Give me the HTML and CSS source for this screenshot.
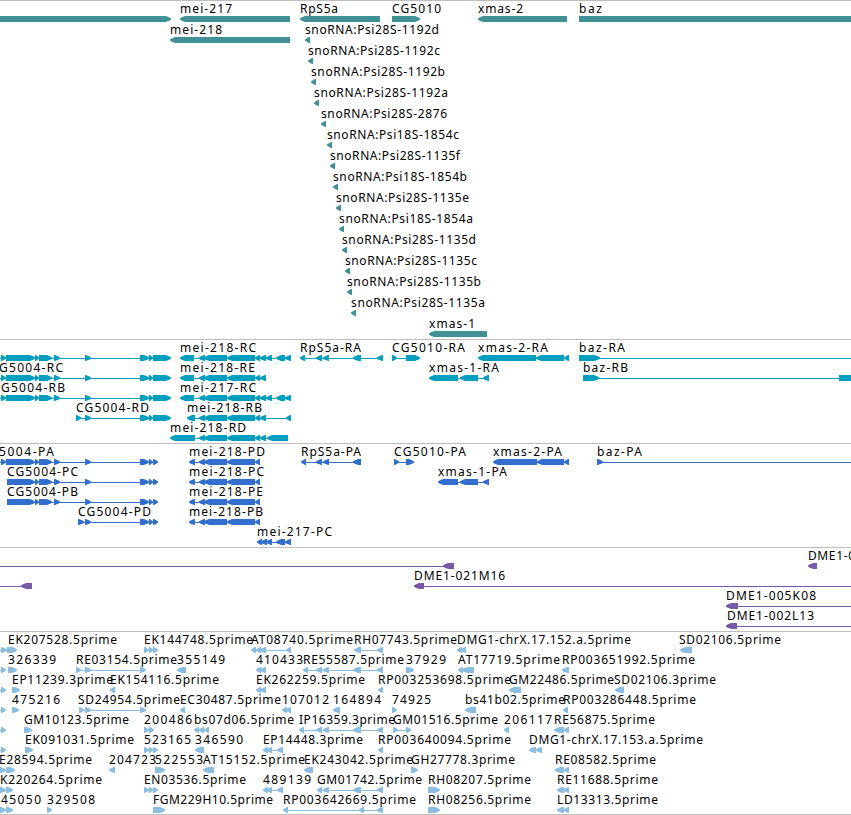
FILE: index.html
```html
<!DOCTYPE html>
<html lang="en">
  <head>
    <meta charset="UTF-8" />
    <meta name="viewport" content="width=device-width, initial-scale=1.0" />
    <title>Genome Browser</title>
    <link rel="stylesheet" href="styles.css">
  </head>
  <body>
    <main class="browser">
      <section class="track genes" id="genes"></section>
      <section class="track transcripts" id="transcripts"></section>
      <section class="track proteins" id="proteins"></section>
      <section class="track clones" id="clones"></section>
      <section class="track ests" id="ests"></section>
    </main>
    <script src="tracks.js"></script>
  </body>
</html>
```

FILE: styles.css
```css
body {
  margin: 0;
  background-color: #fff;
  overflow: hidden;
}

.browser {
  width: 851px;
  border-bottom: 1px solid #bebebe;
}

.track {
  display: flex;
  flex-direction: column;
  box-sizing: border-box;
  border-top: 1px solid #bebebe;
  padding-bottom: 3px;
  overflow: hidden;
}

.row {
  display: block;
  width: 100%;
  height: 20px;
  overflow: visible;
}

.label {
  font-family: "Noto Sans", "DejaVu Sans", sans-serif;
  font-size: 12px;
  fill: #000;
}

.genes {
  fill: #409095;
  padding-bottom: 2px;
}

.genes .row {
  height: 21px;
}

.transcripts {
  fill: #009fbf;
}

.proteins {
  fill: #326ecd;
}

.clones {
  fill: #7859a8;
}

.ests {
  fill: #8abddf;
  padding-bottom: 2px;
}
```

FILE: tracks.js
```javascript
const SVG_NS = "http://www.w3.org/2000/svg";
const BAR_TOP = 15;
const BAR_HEIGHT = 6;
const HEAD = 5;
const BASELINE = 12;

// exon sets used by more than one feature
const cgStart = [[-9, 0], [1, 6], [6, 35], [35, 39], [39, 52], [54, 60], [85, 91]];
const cgEnd = [[140, 149], [149, 153], [153, 171]];
const cgCoding = [[140, 149], [149, 153], [153, 158]];
const cgInner = [[7, 35], [35, 39], [39, 52], [54, 60], [85, 91]];
const meiBody = [[199, 205], [204, 227], [227, 255], [255, 260]];
const meiTail = [[260, 266], [266, 272], [276, 285], [285, 291]];
const rpTail = [[323, 329], [353, 361], [377, 383]];
const three = [[144, 149], [149, 153], [153, 158]];

// feature: [label, label x, label end, strand, exons]
const tracks = {
  genes: [
    [
      ["", 0, 0, "+", [[-20, 171]]],
      ["mei-217", 180, 232, "-", [[180, 290]]],
      ["RpS5a", 300, 338, "-", [[300, 380]]],
      ["CG5010", 392, 441, "+", [[392, 420]]],
      ["xmas-2", 478, 523, "-", [[478, 567]]],
      ["baz", 579, 602, "+", [[579, 900]]],
    ],
    [
      ["mei-218", 170, 222, "-", [[170, 290]]],
      ["snoRNA:Psi28S-1192d", 305, 439, "-", [[305, 310]]],
    ],
    [["snoRNA:Psi28S-1192c", 308, 440, "-", [[308, 313]]]],
    [["snoRNA:Psi28S-1192b", 311, 445, "-", [[311, 316]]]],
    [["snoRNA:Psi28S-1192a", 314, 448, "-", [[314, 319]]]],
    [["snoRNA:Psi28S-2876", 321, 447, "-", [[321, 326]]]],
    [["snoRNA:Psi18S-1854c", 327, 459, "-", [[327, 332]]]],
    [["snoRNA:Psi28S-1135f", 330, 460, "-", [[330, 335]]]],
    [["snoRNA:Psi18S-1854b", 333, 467, "-", [[333, 338]]]],
    [["snoRNA:Psi28S-1135e", 336, 469, "-", [[336, 341]]]],
    [["snoRNA:Psi18S-1854a", 339, 473, "-", [[339, 344]]]],
    [["snoRNA:Psi28S-1135d", 342, 476, "-", [[342, 347]]]],
    [["snoRNA:Psi28S-1135c", 345, 477, "-", [[345, 350]]]],
    [["snoRNA:Psi28S-1135b", 347, 481, "-", [[347, 352]]]],
    [["snoRNA:Psi28S-1135a", 351, 485, "-", [[351, 356]]]],
    [["xmas-1", 429, 475, "-", [[429, 487]]]],
  ],
  transcripts: [
    [
      ["", 0, 0, "+", [...cgStart, ...cgEnd]],
      ["mei-218-RC", 180, 256, "-", [[180, 194], ...meiBody, ...meiTail]],
      ["RpS5a-RA", 300, 361, "-", [[300, 305], [316, 322], ...rpTail]],
      ["CG5010-RA", 392, 465, "+", [[392, 397], [406, 420]]],
      ["xmas-2-RA", 478, 548, "-", [[478, 536], [536, 564], [564, 569]]],
      ["baz-RA", 579, 625, "+", [[579, 600], [900, 910]]],
    ],
    [
      ["G5004-RC", -1, 63, "+", [...cgStart, ...cgEnd]],
      ["mei-218-RE", 180, 255, "-", [[180, 194], ...meiBody, [260, 266]]],
      ["xmas-1-RA", 429, 499, "-", [[429, 458], [460, 478], [483, 489]]],
      ["baz-RB", 583, 628, "+", [[583, 599], [839, 900]]],
    ],
    [
      ["G5004-RB", 1, 65, "+", [...cgStart, ...cgEnd]],
      ["mei-217-RC", 180, 256, "-", [[180, 194], ...meiBody, ...meiTail]],
    ],
    [
      ["CG5004-RD", 76, 149, "+", [[76, 81], [85, 91], ...cgEnd]],
      ["mei-218-RB", 187, 262, "-", [[187, 195], ...meiBody, [260, 266], [286, 291]]],
    ],
    [["mei-218-RD", 170, 246, "-", [[170, 195], ...meiBody, [260, 266], [267, 288]]]],
  ],
  proteins: [
    [
      ["5004-PA", -1, 54, "+", [...cgStart, ...cgCoding]],
      ["mei-218-PD", 189, 265, "-", [[189, 195], ...meiBody]],
      ["RpS5a-PA", 301, 361, "-", [[301, 306], [316, 322], [323, 329], [353, 361]]],
      ["CG5010-PA", 394, 466, "+", [[394, 399], [406, 414]]],
      ["xmas-2-PA", 493, 562, "-", [[493, 537], [537, 564], [564, 569]]],
      ["baz-PA", 597, 642, "+", [[597, 603], [900, 910]]],
    ],
    [
      ["CG5004-PC", 7, 78, "+", [...cgInner, ...cgCoding]],
      ["mei-218-PC", 189, 264, "-", [[189, 195], ...meiBody]],
      ["xmas-1-PA", 438, 507, "-", [[438, 458], [460, 478], [483, 489]]],
    ],
    [
      ["CG5004-PB", 7, 78, "+", [...cgInner, ...cgCoding]],
      ["mei-218-PE", 189, 263, "-", [[189, 195], ...meiBody]],
    ],
    [
      ["CG5004-PD", 78, 151, "+", [[78, 84], [85, 91], ...cgCoding]],
      ["mei-218-PB", 189, 263, "-", [[189, 195], ...meiBody]],
    ],
    [["mei-217-PC", 257, 332, "-", [[257, 262], [261, 267], [266, 272], [276, 285], [285, 291]]]],
  ],
  clones: [
    [
      ["", 0, 0, "-", [[-50, -40], [443, 454]]],
      ["DME1-0", 808, 855, "-", [[808, 817]]],
    ],
    [
      ["", 0, 0, "-", [[-50, -40], [21, 32]]],
      ["DME1-021M16", 414, 505, "-", [[414, 424], [900, 910]]],
    ],
    [["DME1-005K08", 726, 816, "-", [[726, 738], [900, 910]]]],
    [["DME1-002L13", 727, 814, "-", [[726, 737], [900, 910]]]],
  ],
  ests: [
    [
      ["EK207528.5prime", 8, 117, "+", [[-9, 0], [1, 7], [7, 17]]],
      ["EK144748.5prime", 144, 253, "+", three],
      ["AT08740.5prime", 251, 353, "-", [[251, 256], [256, 261], [260, 266], [286, 291]]],
      ["RH07743.5prime", 354, 457, "-", [[354, 361], [377, 383]]],
      ["DMG1-chrX.17.152.a.5prime", 457, 631, "-", [[457, 462], [461, 466]]],
      ["SD02106.5prime", 679, 781, "-", [[680, 692]]],
    ],
    [
      ["326339", 8, 56, "+", [[8, 17]]],
      ["", 0, 0, "+", [[-9, 0], [1, 6]]],
      ["RE03154.5prime", 76, 177, "+", [[76, 81], [85, 91], [140, 146]]],
      ["355149", 177, 225, "-", [[177, 186]]],
      ["410433", 256, 303, "-", [[256, 261], [260, 266]]],
      ["RE55587.5prime", 303, 404, "-", [[303, 308], [316, 322], ...rpTail]],
      ["37929", 406, 446, "+", [[406, 414]]],
      ["AT17719.5prime", 458, 560, "-", [[458, 463], [462, 474]]],
      ["RP003651992.5prime", 562, 695, "-", [[562, 569]]],
    ],
    [
      ["EP11239.3prime", 12, 113, "+", [[12, 20]]],
      ["", 0, 0, "+", [[-9, 0], [1, 6]]],
      ["EK154116.5prime", 110, 219, "-", [[110, 115]]],
      ["EK262259.5prime", 256, 365, "-", [[256, 261], [260, 266]]],
      ["RP003253698.5prime", 378, 511, "-", [[378, 383]]],
      ["GM22486.5prime", 509, 614, "-", [[509, 521]]],
      ["SD02106.3prime", 614, 716, "-", [[615, 624]]],
    ],
    [
      ["475216", 12, 60, "+", [[12, 19]]],
      ["", 0, 0, "+", [[-9, 0], [1, 6]]],
      ["SD24954.5prime", 78, 180, "+", [[79, 84], [85, 91], [140, 146]]],
      ["EC30487.5prime", 180, 281, "-", [[180, 185]]],
      ["107012", 282, 329, "-", [[282, 287], [286, 291]]],
      ["164894", 333, 381, "-", [[333, 340]]],
      ["74925", 392, 431, "+", [[392, 397]]],
      ["bs41b02.5prime", 465, 565, "-", [[465, 476]]],
      ["RP003286448.5prime", 563, 696, "-", [[563, 568]]],
    ],
    [
      ["GM10123.5prime", 24, 129, "+", [[24, 32]]],
      ["", 0, 0, "+", [[-9, 0], [1, 6]]],
      ["200486", 144, 192, "+", [[144, 149], [149, 154]]],
      ["bs07d06.5prime", 194, 294, "-", [[194, 199], [199, 204], [204, 209]]],
      ["IP16359.3prime", 299, 395, "-", [[299, 304], [316, 322], ...rpTail]],
      ["GM01516.5prime", 393, 498, "+", [[393, 398], [406, 411]]],
      ["206117", 504, 552, "-", [[504, 509]]],
      ["RE56875.5prime", 554, 655, "-", [[554, 564], [564, 569]]],
    ],
    [
      ["EK091031.5prime", 25, 134, "+", [[25, 33]]],
      ["", 0, 0, "+", [[-9, 0], [1, 6]]],
      ["523165", 144, 191, "+", three],
      ["346590", 195, 243, "-", [[195, 204]]],
      ["EP14448.3prime", 263, 363, "-", [[263, 268], [267, 272], [277, 283]]],
      ["RP003640094.5prime", 378, 511, "-", [[378, 383]]],
      ["DMG1-chrX.17.153.a.5prime", 529, 703, "-", [[529, 536], [536, 542]]],
    ],
    [
      ["E28594.5prime", -1, 92, "+", [[-9, 0], [0, 6], [6, 15]]],
      ["204723", 109, 156, "-", [[109, 115]]],
      ["522553", 155, 203, "+", [[155, 165]]],
      ["AT15152.5prime", 203, 305, "-", [[203, 214]]],
      ["EK243042.5prime", 304, 413, "-", [[304, 313]]],
      ["GH27778.3prime", 411, 515, "+", [[411, 418]]],
      ["RE08582.5prime", 555, 656, "-", [[555, 564], [564, 569]]],
    ],
    [
      ["K220264.5prime", 0, 102, "+", [[-9, 0], [0, 6], [6, 13]]],
      ["EN03536.5prime", 144, 246, "+", three],
      ["489139", 263, 311, "-", [[263, 268], [267, 272], [277, 283]]],
      ["GM01742.5prime", 317, 422, "-", [[317, 322], ...rpTail]],
      ["RH08207.5prime", 428, 531, "+", [[428, 440]]],
      ["RE11688.5prime", 557, 658, "-", [[557, 564], [564, 569]]],
    ],
    [
      ["45050", 1, 41, "+", [[-9, 0], [0, 6], [6, 13]]],
      ["329508", 47, 95, "+", [[47, 52]]],
      ["FGM229H10.5prime", 153, 273, "+", [[153, 165]]],
      ["RP003642669.5prime", 283, 416, "-", [[283, 288], [359, 364], [377, 383]]],
      ["RH08256.5prime", 428, 531, "+", [[428, 440]]],
      ["LD13313.5prime", 557, 658, "-", [[557, 564], [564, 569]]],
    ],
  ],
};

function createNode(name, attrs) {
  const node = document.createElementNS(SVG_NS, name);
  Object.keys(attrs).forEach(function (key) {
    node.setAttribute(key, attrs[key]);
  });
  return node;
}

// bar with an arrow head on the side the strand points to
function exonPath(start, end, strand) {
  const top = BAR_TOP;
  const mid = BAR_TOP + BAR_HEIGHT / 2;
  const bottom = BAR_TOP + BAR_HEIGHT;
  const tip = strand === "+" ? end : start;
  const back = strand === "+" ? start : end;
  const dir = strand === "+" ? 1 : -1;
  const neck = tip - dir * Math.min(HEAD, end - start - 1);
  const near = tip - dir;
  return `M${back} ${top}H${neck}L${near} ${mid - 1.3}L${tip} ${mid - 0.5}V${mid + 0.5}L${near} ${mid + 1.3}L${neck} ${bottom}H${back}Z`;
}

function drawFeature(svg, feature) {
  const [label, x, labelEnd, strand, exons] = feature;
  const first = exons[0][0];
  const last = exons[exons.length - 1][1];
  if (exons.length > 1) {
    svg.appendChild(
      createNode("rect", { x: first + 1, y: BAR_TOP + 3, width: last - first - 2, height: 1 })
    );
  }
  exons.forEach(function (exon) {
    svg.appendChild(createNode("path", { d: exonPath(exon[0], exon[1], strand) }));
  });
  if (label) {
    const text = createNode("text", {
      class: "label",
      x: x,
      y: BASELINE,
      textLength: labelEnd - x,
    });
    text.textContent = label;
    svg.appendChild(text);
  }
}

Object.keys(tracks).forEach(function (id) {
  const track = document.getElementById(id);
  tracks[id].forEach(function (features) {
    const svg = createNode("svg", { class: "row" });
    features.forEach(function (feature) {
      drawFeature(svg, feature);
    });
    track.appendChild(svg);
  });
});
```
